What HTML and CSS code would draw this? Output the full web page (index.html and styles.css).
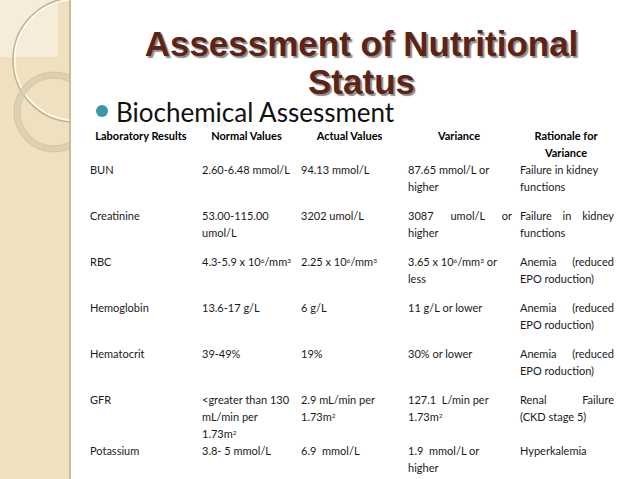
FILE: index.html
```html
<!DOCTYPE html>
<html>
<head>
<meta charset="utf-8">
<link rel="stylesheet" href="styles.css">
</head>
<body>
<div class="slide">
  <aside class="side">
    <svg class="deco" width="69" height="479" viewBox="0 0 69 479">
      <rect x="0" y="0" width="58" height="57" fill="#f5ecd9"/>
      <circle cx="75" cy="60" r="62" fill="none" stroke="#c2b392" stroke-width="1.6"/>
      <circle cx="75" cy="60" r="60.3" fill="none" stroke="#fffaf0" stroke-width="1.6"/>
      <circle cx="54" cy="112" r="37" fill="none" stroke="#d9ccb0" stroke-width="6" opacity="0.8"/>
      <circle cx="54" cy="112" r="40" fill="none" stroke="#cdbf9f" stroke-width="0.8"/>
      <circle cx="54" cy="112" r="34" fill="none" stroke="#cdbf9f" stroke-width="0.8"/>
    </svg>
  </aside>
  <main class="main">
    <h1 class="title">Assessment of Nutritional<br>Status</h1>
    <div class="bullet"><span class="dot"></span><span class="btext">Biochemical Assessment</span></div>
    <table class="lab">
      <colgroup>
        <col class="c1"><col class="c2"><col class="c3"><col class="c4"><col class="c5">
      </colgroup>
      <thead>
        <tr>
          <th>Laboratory Results</th>
          <th>Normal Values</th>
          <th>Actual Values</th>
          <th>Variance</th>
          <th>Rationale for Variance</th>
        </tr>
      </thead>
      <tbody>
        <tr>
          <td>BUN</td>
          <td>2.60-6.48 mmol/L</td>
          <td>94.13 mmol/L</td>
          <td>87.65 mmol/L or higher</td>
          <td>Failure in kidney functions</td>
        </tr>
        <tr>
          <td>Creatinine</td>
          <td>53.00-115.00 umol/L</td>
          <td>3202 umol/L</td>
          <td class="just">3087 umol/L or higher</td>
          <td class="just">Failure in kidney functions</td>
        </tr>
        <tr>
          <td>RBC</td>
          <td class="nw">4.3-5.9 x 10<sup>6</sup>/mm<sup>3</sup></td>
          <td class="nw">2.25 x 10<sup>6</sup>/mm<sup>3</sup></td>
          <td>3.65 x 10<sup>6</sup>/mm<sup>3</sup> or less</td>
          <td class="just">Anemia (reduced EPO roduction)</td>
        </tr>
        <tr>
          <td>Hemoglobin</td>
          <td>13.6-17 g/L</td>
          <td>6 g/L</td>
          <td>11 g/L or lower</td>
          <td class="just">Anemia (reduced EPO roduction)</td>
        </tr>
        <tr>
          <td>Hematocrit</td>
          <td>39-49%</td>
          <td>19%</td>
          <td>30% or lower</td>
          <td class="just">Anemia (reduced EPO roduction)</td>
        </tr>
        <tr>
          <td>GFR</td>
          <td>&lt;greater than 130 mL/min per 1.73m<sup>2</sup></td>
          <td>2.9 mL/min per 1.73m<sup>2</sup></td>
          <td>127.1 &nbsp;L/min per 1.73m<sup>2</sup></td>
          <td class="just">Renal Failure <span class="nw">(CKD stage 5)</span></td>
        </tr>
        <tr>
          <td>Potassium</td>
          <td>3.8- 5 mmol/L</td>
          <td>6.9 &nbsp;mmol/L</td>
          <td>1.9 &nbsp;mmol/L or higher</td>
          <td>Hyperkalemia</td>
        </tr>
      </tbody>
    </table>
  </main>
</div>
</body>
</html>
```

FILE: styles.css
```css
html, body {
  margin: 0;
  padding: 0;
  background: #ffffff;
}
.slide {
  width: 638px;
  height: 479px;
  display: flex;
  overflow: hidden;
  background: #ffffff;
}
.side {
  width: 69px;
  flex: 0 0 69px;
  height: 479px;
  background: #efe1bf;
  border-right: 2px solid #cbbd9c;
  overflow: hidden;
}
.deco {
  display: block;
}
.main {
  flex: 1;
  padding-left: 14px;
  display: flex;
  flex-direction: column;
}
.title {
  margin: 25px 0 0 0;
  font-family: "Liberation Sans", Arial, sans-serif;
  font-weight: bold;
  font-size: 35px;
  line-height: 38px;
  text-align: center;
  color: #5b2417;
  text-shadow: 2px 2px 1px rgba(0, 0, 0, 0.45);
}
.bullet {
  display: flex;
  align-items: center;
  margin-left: 11px;
  margin-top: -5px;
  height: 32px;
}
.dot {
  width: 12px;
  height: 12px;
  border-radius: 50%;
  background: #3d97a8;
  margin-right: 8px;
  margin-top: -3px;
}
.btext {
  font-family: "Lato", sans-serif;
  font-size: 26px;
  color: #111;
}
.lab {
  border-collapse: collapse;
  table-layout: fixed;
  width: 532px;
  margin-top: -1px;
  font-family: "Lato", sans-serif;
  font-size: 11px;
  line-height: 17px;
  color: #1a1a1a;
}
.c1 { width: 112px; }
.c2 { width: 99px; }
.c3 { width: 107px; }
.c4 { width: 112px; }
.c5 { width: 102px; }
.lab th {
  font-weight: bold;
  text-align: center;
  vertical-align: top;
  padding: 0 5px;
  color: #000;
}
.lab td {
  vertical-align: top;
  text-align: left;
  padding: 0 3px 0 5px;
}
.lab tbody tr {
  height: 46px;
}
.lab td.just {
  text-align: justify;
}
.nw {
  white-space: nowrap;
}
.lab sup {
  font-size: 6.5px;
  line-height: 0;
  vertical-align: 3px;
}
```
